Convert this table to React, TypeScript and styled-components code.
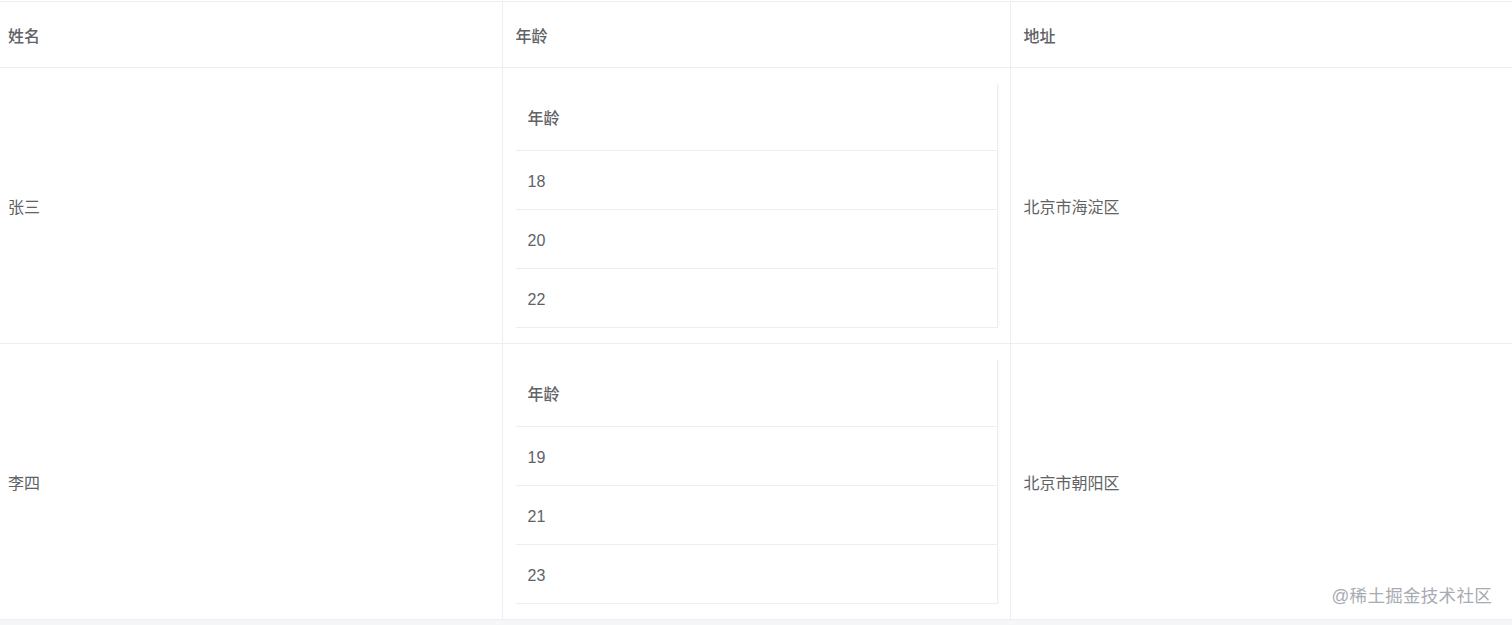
import styled, { createGlobalStyle } from 'styled-components'

const GlobalStyle = createGlobalStyle`
	html, body {
		margin: 0;
		padding: 0;
		background: #ffffff;
		font-family: 'Liberation Sans', 'Noto Sans CJK SC', sans-serif;
	}
`

const Page = styled.div`
	position: relative;
	width: 1512px;
	height: 625px;
	padding-top: 1px;
	box-sizing: border-box;
	background: #ffffff;
	overflow: hidden;
`

const OuterTable = styled.table`
	width: 1512px;
	border-collapse: collapse;
	table-layout: fixed;
	border-top: 1px solid #ebeef5;
	color: #606266;
	font-size: 16px;
`

const HeadCell = styled.th<{ $pad: number; $width?: number; $last?: boolean }>`
	width: ${(p) => (p.$width ? `${p.$width}px` : 'auto')};
	height: 66px;
	padding: 0 0 0 ${(p) => p.$pad}px;
	text-align: left;
	font-weight: 500;
	color: #606266;
	border-bottom: 1px solid #ebeef5;
	border-right: ${(p) => (p.$last ? 'none' : '1px solid #ebeef5')};
	box-sizing: border-box;
`

const BodyCell = styled.td<{ $pad: number; $last?: boolean }>`
	padding: 0 0 0 ${(p) => p.$pad}px;
	vertical-align: middle;
	border-bottom: 1px solid #ebeef5;
	border-right: ${(p) => (p.$last ? 'none' : '1px solid #ebeef5')};
	color: #606266;
`

const NestCell = styled.td`
	padding: 16px 12px 15px 13px;
	border-bottom: 1px solid #ebeef5;
	border-right: 1px solid #ebeef5;
`

const InnerTable = styled.table`
	width: 482px;
	border-collapse: collapse;
	border-right: 1px solid #ebeef5;
	box-shadow: 1px 0 2px rgba(0, 0, 0, 0.03);
	color: #606266;
	font-size: 16px;
`

const InnerHead = styled.th`
	height: 66px;
	padding: 0 0 0 12px;
	text-align: left;
	font-weight: 500;
	border-bottom: 1px solid #ebeef5;
`

const InnerCell = styled.td`
	height: 54px;
	padding: 4px 0 0 12px;
	border-bottom: 1px solid #ebeef5;
`

const Footer = styled.div`
	height: 5px;
	background: #f5f6f8;
`

const Watermark = styled.div`
	position: absolute;
	right: 20px;
	bottom: 18px;
	font-size: 17.5px;
	color: #a8abb2;
	letter-spacing: 0.3px;
	text-shadow: 0 0 1px #ffffff;
`

type Person = { name: string; ages: number[]; address: string }

const people: Person[] = [
	{ name: '张三', ages: [18, 20, 22], address: '北京市海淀区' },
	{ name: '李四', ages: [19, 21, 23], address: '北京市朝阳区' },
]

const App = () => {
	return (
		<Page>
			<GlobalStyle />
			<OuterTable>
				<thead>
					<tr>
						<HeadCell $pad={8} $width={502}>姓名</HeadCell>
						<HeadCell $pad={13} $width={508}>年龄</HeadCell>
						<HeadCell $pad={13} $last>地址</HeadCell>
					</tr>
				</thead>
				<tbody>
					{people.map((p) => (
						<tr key={p.name}>
							<BodyCell $pad={8}>{p.name}</BodyCell>
							<NestCell>
								<InnerTable>
									<thead>
										<tr>
											<InnerHead>年龄</InnerHead>
										</tr>
									</thead>
									<tbody>
										{p.ages.map((a) => (
											<tr key={a}>
												<InnerCell>{a}</InnerCell>
											</tr>
										))}
									</tbody>
								</InnerTable>
							</NestCell>
							<BodyCell $pad={13} $last>{p.address}</BodyCell>
						</tr>
					))}
				</tbody>
			</OuterTable>
			<Footer />
			<Watermark>@稀土掘金技术社区</Watermark>
		</Page>
	)
}

export default App
